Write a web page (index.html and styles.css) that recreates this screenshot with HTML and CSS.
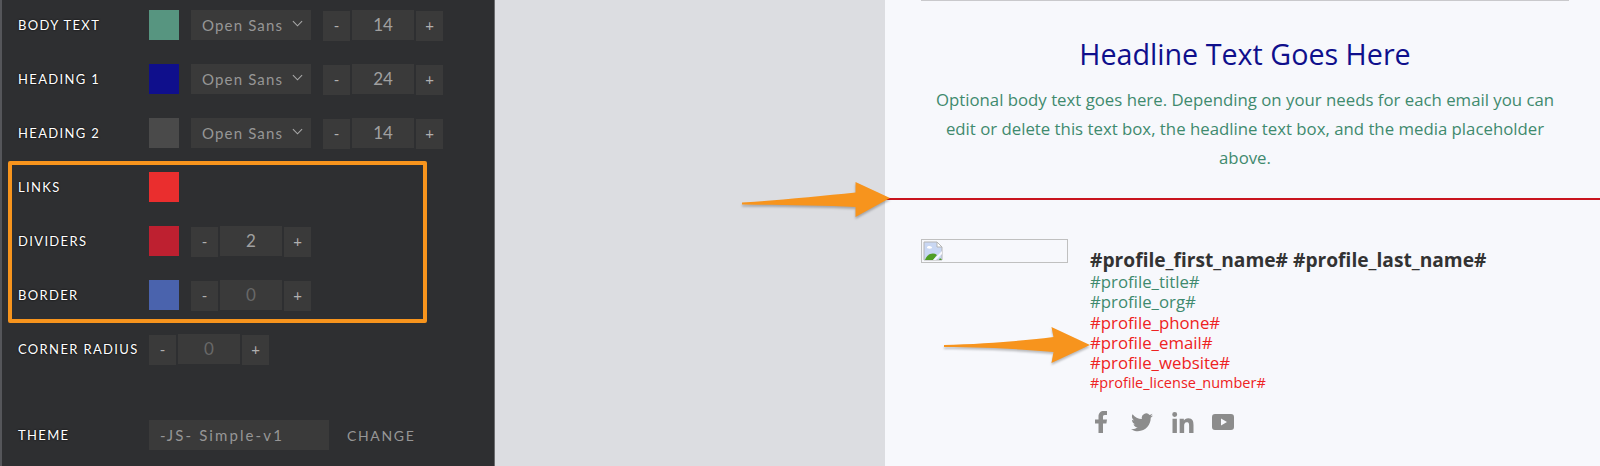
FILE: index.html
```html
<!DOCTYPE html>
<html lang="en">
<head>
    <meta charset="UTF-8">
    <title>Email theme editor</title>
    <link rel="stylesheet" href="styles.css">
</head>
<body>
    <aside class="panel">
        <div class="row">
            <span class="label">Body Text</span>
            <span class="swatch swatch-body"></span>
            <span class="select">Open Sans
                <svg class="chevron" viewBox="0 0 12 7"><path d="M1 1l5 5 5-5"/></svg>
            </span>
            <span class="stepper">
                <span class="step">-</span><span class="value">14</span><span class="step">+</span>
            </span>
        </div>
        <div class="row">
            <span class="label">Heading 1</span>
            <span class="swatch swatch-h1"></span>
            <span class="select">Open Sans
                <svg class="chevron" viewBox="0 0 12 7"><path d="M1 1l5 5 5-5"/></svg>
            </span>
            <span class="stepper">
                <span class="step">-</span><span class="value">24</span><span class="step">+</span>
            </span>
        </div>
        <div class="row">
            <span class="label">Heading 2</span>
            <span class="swatch swatch-h2"></span>
            <span class="select">Open Sans
                <svg class="chevron" viewBox="0 0 12 7"><path d="M1 1l5 5 5-5"/></svg>
            </span>
            <span class="stepper">
                <span class="step">-</span><span class="value">14</span><span class="step">+</span>
            </span>
        </div>
        <div class="row">
            <span class="label">Links</span>
            <span class="swatch swatch-links"></span>
        </div>
        <div class="row">
            <span class="label">Dividers</span>
            <span class="swatch swatch-dividers"></span>
            <span class="stepper">
                <span class="step">-</span><span class="value">2</span><span class="step">+</span>
            </span>
        </div>
        <div class="row">
            <span class="label">Border</span>
            <span class="swatch swatch-border"></span>
            <span class="stepper">
                <span class="step">-</span><span class="value dim">0</span><span class="step">+</span>
            </span>
        </div>
        <div class="row">
            <span class="label">Corner Radius</span>
            <span class="stepper">
                <span class="step">-</span><span class="value dim">0</span><span class="step">+</span>
            </span>
        </div>
        <div class="row row-theme">
            <span class="label">Theme</span>
            <span class="theme-name">-JS- Simple-v1</span>
            <span class="change">Change</span>
        </div>
        <div class="callout"></div>
    </aside>

    <div class="gutter"></div>

    <main class="preview">
        <hr class="top-rule">
        <h1>Headline Text Goes Here</h1>
        <p class="intro">Optional body text goes here. Depending on your needs for each email you can edit or delete this text box, the headline text box, and the media placeholder above.</p>
        <div class="divider"></div>
        <div class="signature">
            <div class="broken-img">
                <svg width="20" height="20" viewBox="0 0 20 20">
                    <path d="M1 1h13l5 5v13H1z" fill="#c9d7f3" stroke="#b5b5b5"/>
                    <path d="M14 1v5h5z" fill="#fff" stroke="#b5b5b5"/>
                    <path d="M4 6.500c0-2 4-2 5 0 1 1.500-6 1.500-5 0z" fill="#fff"/>
                    <path d="M2 19c2-6 8-8 12-5l-4 5z" fill="#4f9e24"/>
                    <path d="M16 19l1-2 2 2z" fill="#4f9e24"/>
                    <path d="M10 19l9-9v3l-6 6z" fill="#f7f8fc"/>
                </svg>
            </div>
            <div class="contact">
                <div class="name">#profile_first_name# #profile_last_name#</div>
                <div class="line">#profile_title#</div>
                <div class="line">#profile_org#</div>
                <div class="line link">#profile_phone#</div>
                <div class="line link">#profile_email#</div>
                <div class="line link">#profile_website#</div>
                <div class="license">#profile_license_number#</div>
                <div class="social">
                    <svg class="icon-f" viewBox="0 0 12 22"><path d="M3.500 22V12.500H0V8.500h3.500V5.500C3.500 2 5.600 0 8.800 0H12v4H9.800C8.400 4 8 4.700 8 5.900v2.600h4l-.6 4H8V22z"/></svg>
                    <svg class="icon-tw" viewBox="0 0 24 20"><path d="M24 2.400c-.9.400-1.800.7-2.800.8 1-.6 1.800-1.600 2.200-2.700-1 .6-2 1-3.100 1.200A4.900 4.900 0 0 0 11.900 6.200C7.800 6 4.200 4.100 1.700.9c-1.300 2.200-.7 5.100 1.500 6.600-.8 0-1.600-.2-2.200-.6 0 2.400 1.700 4.400 3.900 4.900-.7.200-1.500.2-2.200.1.600 2 2.400 3.400 4.600 3.400A9.900 9.900 0 0 1 0 17.300C2.200 18.700 4.800 19.500 7.500 19.500c9.100 0 14.300-7.700 14-14.600 1-.7 1.800-1.500 2.500-2.500z"/></svg>
                    <svg class="icon-in" viewBox="0 0 22 22"><path d="M0 7h4.600v15H0zM2.300 0a2.600 2.600 0 1 1 0 5.200 2.600 2.600 0 0 1 0-5.200zM7.500 7h4.400v2c.7-1.300 2.300-2.400 4.600-2.400 4.700 0 5.500 3.100 5.500 7.100V22h-4.600v-7.300c0-1.800 0-4-2.400-4s-2.800 1.900-2.800 3.900V22H7.500z"/></svg>
                    <svg class="icon-yt" viewBox="0 0 22 16"><path d="M3 0h16a3 3 0 0 1 3 3v10a3 3 0 0 1-3 3H3a3 3 0 0 1-3-3V3a3 3 0 0 1 3-3zm6 4.500v7l6-3.500z" fill-rule="evenodd"/></svg>
                </div>
            </div>
        </div>
    </main>

    <svg class="arrow arrow-divider" viewBox="0 0 150 38" preserveAspectRatio="none"><path d="M2 21.500C40 19 80 15 114 11.500L114 1 148 17 114 36 114 26C80 24 40 24 2 23.500z"/></svg>
    <svg class="arrow arrow-email" viewBox="0 0 148 38" preserveAspectRatio="none"><path d="M2 19C40 18 80 15 110 11L108 1 146 19 108 37 110 26C80 23 40 21 2 21z"/></svg>
</body>
</html>
```

FILE: styles.css
```css
* {
    box-sizing: border-box;
}

html, body {
    margin: 0;
    padding: 0;
    height: 100%;
    overflow: hidden;
}

body {
    display: flex;
    position: relative;
    background: #dcdde1;
    font-family: "Open Sans", Arial, sans-serif;
}

/* Editor panel */
.panel {
    position: relative;
    width: 495px;
    flex-shrink: 0;
    padding: 10px 0 0 18px;
    background: #2e2f31;
    border-left: 2px solid #55565a;
    border-right: 1px solid #6a6b6e;
    font-family: Lato, Arial, sans-serif;
}

.row {
    display: flex;
    align-items: center;
    height: 30px;
    margin-bottom: 24px;
    margin-left: -2px;
}

.row-theme {
    margin-top: 56px;
}

.label {
    width: 131px;
    flex-shrink: 0;
    color: #fff;
    font-size: 13px;
    letter-spacing: 1.350px;
    text-shadow: 0 0 2px #000;
    text-transform: uppercase;
    white-space: nowrap;
}

.swatch {
    width: 30px;
    height: 30px;
    margin-right: 12px;
    flex-shrink: 0;
}

.swatch-body { background: #579580; }
.swatch-h1 { background: #0f0f8c; }
.swatch-h2 { background: #4a4a4a; }
.swatch-links { background: #ea2e2e; }
.swatch-dividers { background: #be2030; }
.swatch-border { background: #4a63ad; }

.select {
    display: flex;
    align-items: center;
    justify-content: space-between;
    width: 120px;
    height: 30px;
    margin-right: 12px;
    padding: 0 8px 0 11px;
    background: #3a3a3a;
    color: #969696;
    font-size: 15px;
    letter-spacing: 1.150px;
}

.chevron {
    width: 11px;
    height: 7px;
    margin-bottom: 3px;
    fill: none;
    stroke: #a8a8a8;
    stroke-width: 1.2;
}

.stepper {
    display: flex;
    align-items: flex-start;
    gap: 2px;
    height: 31px;
    color: #b0b0b0;
}

.step {
    width: 27px;
    height: 30px;
    margin-top: 1px;
    background: #3a3a3a;
    font-size: 15px;
    line-height: 29px;
    text-align: center;
}

.value {
    width: 62px;
    height: 30px;
    background: #3a3a3a;
    color: #a0a0a0;
    font-size: 17px;
    line-height: 30px;
    text-align: center;
}

.value.dim {
    color: #686868;
}

.theme-name {
    width: 180px;
    height: 30px;
    padding-left: 11px;
    background: #3a3a3a;
    color: #969696;
    font-size: 15px;
    line-height: 30px;
    letter-spacing: 2.100px;
}

.change {
    margin-left: 18px;
    color: #969696;
    font-size: 14px;
    letter-spacing: 1.650px;
    text-transform: uppercase;
}

.callout {
    position: absolute;
    left: 6px;
    top: 161px;
    width: 419px;
    height: 162px;
    border: 4px solid #f7941d;
    border-radius: 2px;
}

.gutter {
    width: 390px;
    flex-shrink: 0;
}

/* Email preview */
.preview {
    flex: 1;
    padding: 0 31px 0 36px;
    background: #f7f8fc;
    position: relative;
}

.top-rule {
    height: 1px;
    margin: 0;
    border: 0;
    background: #c9c9cc;
}

h1 {
    margin: 34px 0 0;
    color: #0f0f8c;
    font-size: 28.700px;
    font-weight: 400;
    line-height: 38px;
    text-align: center;
}

.intro {
    margin: 12px 0 0;
    color: #3f8a6e;
    font-size: 16.800px;
    line-height: 29px;
    text-align: center;
}

.divider {
    height: 2px;
    margin: 26px -31px 0 -36px;
    background: #c8141e;
}

.signature {
    display: flex;
    gap: 22px;
    margin-top: 39px;
}

.broken-img {
    width: 147px;
    height: 24px;
    flex-shrink: 0;
    border: 1px solid #c0c0c0;
    padding: 1px;
    line-height: 0;
}

.contact {
    padding-top: 8px;
}

.name {
    color: #333;
    font-size: 19.200px;
    font-weight: 700;
    line-height: 25px;
}

.line {
    color: #3f8a6e;
    font-size: 16.800px;
    line-height: 20.300px;
}

.line.link,
.license {
    color: #ee2222;
}

.license {
    font-size: 14.500px;
    line-height: 19px;
}

.social {
    display: flex;
    align-items: center;
    gap: 18px;
    margin-top: 19px;
    margin-left: 5px;
}

.social svg {
    fill: #8c8c8c;
    display: block;
}

.icon-f { width: 12px; height: 22px; }
.icon-tw { width: 22px; height: 19px; margin-left: 6px; }
.icon-in { width: 22px; height: 21px; margin-left: 1px; }
.icon-yt { width: 22px; height: 16px; }

/* Annotation arrows on top of the screenshot */
.arrow {
    position: absolute;
    fill: #f7941d;
    filter: drop-shadow(0 2px 1px rgba(0, 0, 0, 0.25));
}

.arrow-divider {
    left: 740px;
    top: 181px;
    width: 152px;
    height: 38px;
}

.arrow-email {
    left: 942px;
    top: 326px;
    width: 150px;
    height: 38px;
}
```
